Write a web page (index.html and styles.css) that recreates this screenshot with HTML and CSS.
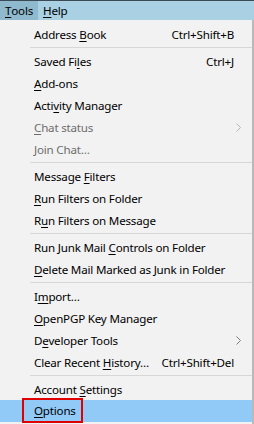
FILE: index.html
```html
<!DOCTYPE html>
<html lang="en">
<head>
    <meta charset="UTF-8">
    <title>Tools menu</title>
    <link rel="stylesheet" href="styles.css">
</head>
<body>
    <div class="menubar">
        <span class="bar-item open"><u>T</u>ools</span>
        <span class="bar-item"><u>H</u>elp</span>
    </div>

    <div class="menu">
        <div class="item"><span class="label">Address <u>B</u>ook</span><span class="key">Ctrl+Shift+B</span></div>
        <div class="sep"></div>
        <div class="item"><span class="label">Saved Fi<u>l</u>es</span><span class="key">Ctrl+J</span></div>
        <div class="item"><span class="label"><u>A</u>dd-ons</span></div>
        <div class="item"><span class="label">Acti<u>v</u>ity Manager</span></div>
        <div class="item disabled"><span class="label"><u>C</u>hat status</span>
            <svg class="arrow" width="5" height="9" viewBox="0 0 5 9"><polyline points="0.5,0.5 4.5,4.5 0.5,8.5" fill="none" stroke="currentColor"/></svg>
        </div>
        <div class="item disabled"><span class="label">Join Chat…</span></div>
        <div class="sep"></div>
        <div class="item"><span class="label">Message <u>F</u>ilters</span></div>
        <div class="item"><span class="label"><u>R</u>un Filters on Folder</span></div>
        <div class="item"><span class="label">R<u>u</u>n Filters on Message</span></div>
        <div class="sep"></div>
        <div class="item"><span class="label">Run Junk Mail <u>C</u>ontrols on Folder</span></div>
        <div class="item"><span class="label"><u>D</u>elete Mail Marked as Junk in Folder</span></div>
        <div class="sep"></div>
        <div class="item"><span class="label">I<u>m</u>port…</span></div>
        <div class="item"><span class="label"><u>O</u>penPGP Key Manager</span></div>
        <div class="item"><span class="label">D<u>e</u>veloper Tools</span>
            <svg class="arrow" width="5" height="9" viewBox="0 0 5 9"><polyline points="0.5,0.5 4.5,4.5 0.5,8.5" fill="none" stroke="currentColor"/></svg>
        </div>
        <div class="item"><span class="label">Clear Recent <u>H</u>istory…</span><span class="key">Ctrl+Shift+Del</span></div>
        <div class="sep"></div>
        <div class="item"><span class="label">Account <u>S</u>ettings</span></div>
        <div class="item active"><span class="label marked"><u>O</u>ptions</span></div>
    </div>
</body>
</html>
```

FILE: styles.css
```css
body {
    margin: 0;
    width: 254px;
    height: 424px;
    overflow: hidden;
    background: #f2f2f2;
    font-family: 'Noto Sans', sans-serif;
    font-size: 11.6px;
    letter-spacing: -0.2px;
    color: #000;
}

u {
    text-decoration: underline;
    text-underline-offset: 2px;
}

.menubar {
    display: flex;
    height: 19px;
    border-top: 1px solid #3b4a55;
    background: #a9d1e3;
}

.bar-item {
    display: flex;
    align-items: center;
    padding: 0 6px 0 5px;
}

.bar-item.open {
    background: #8fb9cd;
    padding-right: 5px;
}

.menu {
    width: 252px;
    padding: 3px 0 2px 0;
    border-right: 2px solid #b9b9b9;
    background: #f2f2f2;
}

.item {
    display: flex;
    align-items: center;
    height: 22px;
    padding: 0 18px 0 34px;
    white-space: nowrap;
}

.item .label {
    flex: 1;
}

.item .key {
    margin-left: 8px;
}

.item .arrow {
    margin-right: -7px;
    color: #7a7a7a;
}

.item.disabled {
    color: #6d6d6d;
}

.item.disabled .arrow {
    color: #b5b5b5;
}

.item.active {
    background: #91c9f7;
}

.item .marked {
    flex: none;
    box-sizing: border-box;
    height: 25px;
    margin: -2px 0 0 -12px;
    padding: 0 5px 0 10px;
    line-height: 21px;
    border: 2px solid #e00000;
}

.sep {
    height: 1px;
    margin: 2px 0 2px 30px;
    background: #d7d7d7;
}
```
